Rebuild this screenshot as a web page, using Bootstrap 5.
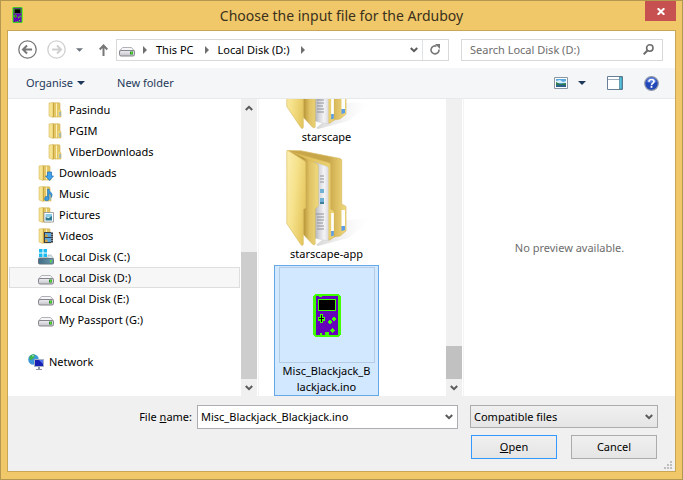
<!DOCTYPE html>
<html lang="en">
<head>
<meta charset="utf-8">
<meta name="viewport" content="width=device-width, initial-scale=1">
<title>Choose the input file for the Arduboy</title>
<link href="https://cdn.jsdelivr.net/npm/bootstrap@5.3.0/dist/css/bootstrap.min.css" rel="stylesheet">
<style>
  body { font-family: "Noto Sans", "Open Sans", sans-serif; font-size: 11px; line-height: 16px; color: #000; }
  button { color: inherit; }
  svg { display: block; flex: none; }
  .dialog-frame { background: #f0c869; border: 1px solid #b5984f; padding: 0 6px 7px; }
  .title-bar { height: 29px; padding-left: 5px; }
  .title-bar h1 { font-size: 14px; line-height: 30px; color: #3a301c; }
  .app-icon { margin: 6px 15px 0 0; }
  .close-btn { width: 31px; height: 20px; background: #c75050; }
  .client { border: 1px solid #c9a655; background: #fff; min-height: 0; }
  .addr-row { height: 37px; padding: 0 12px 0 10px; }
  .gap-before { margin-left: 10px; }
  .field { height: 22px; border: 1px solid #d9d9d9; background: #fff; }
  .address { padding-left: 2px; }
  .crumb { color: #000; margin: 0 11px 0 9px; }
  .refresh { width: 26px; padding: 0 7px; }
  .search-box { width: 202px; margin-left: 12px; }
  .search-box input { font-size: 11px; line-height: 16px; color: #6d6d6d; outline: 0; min-width: 0; }
  .search-box input::placeholder { color: #6d6d6d; opacity: 1; }
  .command-bar { height: 31px; background: #f5f6f7; border-bottom: 1px solid #e8e9eb; color: #1e395b; padding: 0 16px 0 18px; }
  .tool { margin-right: 21px; }
  .panes { flex: 1 1 0; min-height: 0; }
  .nav-pane { width: 251px; padding-right: 1px; border-right: 1px solid #f4f4f4; }
  .tree-row { height: 21px; margin: 0 1px; gap: 5px; color: #000; border: 1px solid transparent; }
  .tree-row.current { background: #f7f7f7; border-color: #dedede; }
  .level-1 { padding-left: 18px; }
  .level-2 { padding-left: 28px; }
  .level-3 { padding-left: 38px; }
  .tree-gap { height: 21px; }
  .scroller { width: 16px; background: #f0f0f0; }
  .scroller button { height: 17px; }
  .thumb { background: #cdcdcd; }
  .nav-thumb { height: 127px; }
  .file-thumb { height: 33px; background: #c1c1c1; }
  .file-pane { width: 205px; padding-right: 1px; border-right: 1px solid #f4f4f4; }
  .file-list { padding-left: 15px; min-width: 0; }
  .file-item { width: 105px; height: 117px; padding-top: 2px; color: #000; }
  .file-item > svg { margin-left: 14px; }
  .file-item.chosen { height: 131px; padding-top: 1px; background: #d1e8ff; border: 1px solid #66a7e8; }
  .preview-box { width: 96px; height: 96px; border: 1px solid #b5cde4; }
  .preview-note { color: #6d6d6d; }
  .dialog-footer { background: #f0f0f0; height: 75px; padding: 9px 17px 0 0; }
  .name-label { margin-right: 5px; }
  .name-box { width: 261px; height: 24px; border: 1px solid #abadb3; background: #fff; }
  .name-box input { font-size: 11px; line-height: 16px; padding: 0 3px; outline: 0; min-width: 0; color: #000; }
  .type-box { width: 188px; margin-left: 12px; }
  .type-box select { appearance: none; height: 23px; border: 1px solid #acacac; background: linear-gradient(#f0f0f0, #e5e5e5); padding: 0 3px; color: #000; }
  .type-box svg { right: 5px; top: 9px; pointer-events: none; }
  .dlg-buttons { gap: 14px; margin-top: 6px; padding-right: 1px; }
  .dlg-btn { width: 86px; height: 24px; border: 1px solid #acacac; background: linear-gradient(#f0f0f0, #e5e5e5); }
  .dlg-btn.primary { border-color: #3399ff; }
  .size-grip { right: 3px; bottom: 2px; }
</style>
<script src="https://cdn.jsdelivr.net/npm/bootstrap@5.3.0/dist/js/bootstrap.bundle.min.js"></script>
</head>
<body>
<svg width="0" height="0" class="position-absolute" aria-hidden="true">
  <defs>
    <linearGradient id="gFront" x1="0" x2="1" y1="0" y2=".5"><stop offset="0" stop-color="#fbeeb0"/><stop offset=".5" stop-color="#f6e28c"/><stop offset="1" stop-color="#e6c860"/></linearGradient>
    <linearGradient id="gMid" x1="0" x2="1"><stop offset=".5" stop-color="#b8963a"/><stop offset=".7" stop-color="#dfc264"/><stop offset="1" stop-color="#f1da80"/></linearGradient>
    <linearGradient id="gThird" x1="0" x2="1"><stop offset="0" stop-color="#d9b64f"/><stop offset="1" stop-color="#ecd272"/></linearGradient>
    <linearGradient id="gBack" x1="0" x2="1"><stop offset=".7" stop-color="#c8a64a"/><stop offset=".85" stop-color="#dec062"/><stop offset="1" stop-color="#efd980"/></linearGradient>
    <linearGradient id="gPaper" x1="0" x2="1"><stop offset="0" stop-color="#a9abb0"/><stop offset=".35" stop-color="#d4d5d9"/><stop offset=".7" stop-color="#f4f4f7"/><stop offset="1" stop-color="#dcdde0"/></linearGradient>
    <linearGradient id="gShade" x1="0" x2="1"><stop offset="0" stop-color="#bbb" stop-opacity=".6"/><stop offset="1" stop-color="#eee" stop-opacity="0"/></linearGradient>
    <linearGradient id="gDrive" x1="0" x2="0" y1="0" y2="1"><stop offset="0" stop-color="#eeeef2"/><stop offset="1" stop-color="#c2c3ca"/></linearGradient>
    <linearGradient id="gSys" x1="0" x2="1"><stop offset="0" stop-color="#3f6d86"/><stop offset="1" stop-color="#6a9bb0"/></linearGradient>
  </defs>
  <symbol id="arduboy" viewBox="0 0 28 43">
    <path fill="#40ff00" d="M2 0h24v1h1v1h1v39h-1v1h-1v1H2v-1H1v-1H0V2h1V1h1z"/>
    <path fill="#6600bb" d="M3 2h22v39H3z"/>
    <path fill="#40ff00" d="M6 2h3v1H6zM5 5h18v12H5zM7 20h3v3h2v4h-2v2H7v-2H5v-4h2zM16 26h2v1h1v2h-1v1h-2v-1h-1v-2h1zM20 23h2v1h1v2h-1v1h-2v-1h-1v-2h1zM19 34h1v1h1v1h1v1h-1v1h-1v1h-1v-1h-1v-1h-1v-1h1v-1h1zM7 39h2v2H7zM12 38h4v3h-4z"/>
    <path d="M6 6h16v10H6zM8 21h1v3h2v1H9v3H8v-3H6v-1h2z"/>
  </symbol>
  <symbol id="bigfolder" viewBox="0 0 96 96">
    <path fill="url(#gShade)" d="M30 95L60 70l20-1 3 3-21 16-30 8z"/>
    <path fill="url(#gBack)" stroke="#d8bd65" stroke-width=".7" d="M1 .5L15 .8 54 8.500q1.700.5 1.700 2V54l4.300 2.500V81l-6 5-12 2z"/>
    <path fill="#fff" d="M55.500 60h3.500v16h-3.500z"/><path fill="#5a9de6" d="M55.500 76h3.500v4l-3.500 1z"/>
    <path fill="url(#gThird)" stroke="#cba94a" stroke-width=".5" d="M3 1l40 11.500q1.800.7 1.800 2.500v44l3.500 2v26l-5.300 3.500z"/>
    <path fill="#fff" d="M45.200 63h2.600v18h-2.600z"/><path fill="#5a9de6" d="M45.200 81h2.600v4.500l-2.600 1z"/>
    <path fill="url(#gPaper)" stroke="#c9cace" stroke-width=".4" d="M28 12l13 4.500q1.300.5 1.300 2V91L28 88z"/>
    <path stroke="#8d929a" d="M34 26h4M34 29h4M34 32h4M30 64h8M31 67h7M31 70h7M31 73h6M31 76h7M31 79h7"/>
    <path fill="#70b0d5" d="M34 39h4v4h-4zM34 48h4v5h-4z"/><path fill="#3d7f9a" d="M34 52h4v2h-4z"/>
    <path fill="url(#gMid)" stroke="#d0ae4e" stroke-width=".4" d="M3 1l27.500 12.500q1.800 1 1.800 3V56l-3 3v35q-1.300 2-3 0L15 82z"/>
    <path fill="url(#gFront)" stroke="#dcc067" stroke-width=".7" d="M.8 1.500Q1 0 2.500.8l16 10q1.200 1 1.200 2.700v44l-2.400 2v35q-1 2-2.500 0L.8 73.500z"/>
  </symbol>
  <symbol id="folder" viewBox="0 0 16 16">
    <path fill="#e4c665" stroke="#cfae4b" stroke-width=".6" d="M5 .8h6q1 0 1 1V8l1 1v6H5z"/><path fill="#fbf0bd" d="M8 2l1-1v13l-1 1z"/>
    <path fill="#f6e390" stroke="#d7ba5f" stroke-width=".6" d="M1 1l4-.5v15L1 14z"/><path fill="#c9a540" d="M5 1h1v14H5z"/>
    <path fill="#ecd378" d="M10 8h2.500v6.500H10z"/><path fill="#68ace8" d="M11.500 10h1v4h-1z"/>
  </symbol>
  <symbol id="drive" viewBox="0 0 16 16">
    <path fill="#f6f6f8" stroke="#b0b1b6" d="M3.500 5.500h9l3 3.500H.5z"/><rect x=".5" y="8.500" width="15" height="5.500" rx="1.500" fill="url(#gDrive)" stroke="#85868c"/>
    <path fill="#2b8a2b" d="M11 9.500h3v3h-3z"/><path fill="#54e02c" d="M12 10h1.500v2H12z"/>
  </symbol>
  <symbol id="sysdrive" viewBox="0 0 16 16">
    <path fill="#1cbbef" d="M1 0h3.500v3.500H1zM5.500 0H9v3.500H5.500zM1 4.500h3.500V8H1zM5.500 4.500H9V8H5.500z"/><path fill="#d9e3ea" stroke="#9aa6ae" stroke-width=".6" d="M10 6h3l3 4H0l1-1.500h9z"/>
    <rect x=".5" y="9.500" width="15" height="5.500" rx="1" fill="url(#gSys)" stroke="#63747e"/><path fill="#54e02c" d="M12 11h1.500v2.500H12z"/>
  </symbol>
  <symbol id="chev" viewBox="0 0 8 6"><path fill="none" stroke="#5a5a5a" stroke-width="2" d="M.8 1L4 4.200 7.200 1"/></symbol>
  <symbol id="tri" viewBox="0 0 4 8"><path fill="#6f6f6f" d="M0 0l4 4-4 4z"/></symbol>
  <symbol id="down" viewBox="0 0 8 4"><path fill="currentColor" d="M0 0h8L4 4z"/></symbol>
</svg>

<div class="dialog-frame vh-100 d-flex flex-column">
  <header class="title-bar flex-shrink-0 d-flex align-items-start">
    <svg width="11" height="16" class="app-icon"><use href="#arduboy"/></svg>
    <h1 class="flex-grow-1 text-center m-0 fw-normal">Choose the input file for the Arduboy</h1>
    <button type="button" class="close-btn border-0 p-0 d-flex align-items-center justify-content-center" aria-label="Close">
      <svg width="8" height="7" viewBox="0 0 8 7"><path stroke="#fff" stroke-width="2" d="M.7.200l6.600 6.600M7.300.200L.7 6.800"/></svg>
    </button>
  </header>

  <main class="client flex-grow-1 d-flex flex-column">
    <div class="addr-row flex-shrink-0 d-flex align-items-center">
      <button type="button" class="border-0 bg-transparent p-0" aria-label="Back"><svg width="19" height="19" viewBox="0 0 19 19" fill="none" stroke="#777"><circle cx="9.500" cy="9.500" r="8.700" stroke-width="1.300"/><path stroke-width="2" d="M14 9.500H5.500M9 5.500L5 9.500l4 4"/></svg></button>
      <button type="button" class="border-0 bg-transparent p-0 gap-before" aria-label="Forward"><svg width="19" height="19" viewBox="0 0 19 19" fill="none" stroke="#cfcfcf"><circle cx="9.500" cy="9.500" r="8.700" stroke-width="1.300"/><path stroke-width="2" d="M5 9.500h8.500M10 5.500l4 4-4 4"/></svg></button>
      <button type="button" class="border-0 bg-transparent p-0 gap-before text-secondary" aria-label="Recent locations"><svg width="7" height="4"><use href="#down"/></svg></button>
      <button type="button" class="border-0 bg-transparent p-0 ms-3" aria-label="Up"><svg width="9" height="12" viewBox="0 0 9 12" fill="none" stroke="#777" stroke-width="2"><path d="M4.500 12V2M.7 5.500l3.800-4 3.800 4"/></svg></button>
      <nav class="field address flex-grow-1 d-flex align-items-center ms-2" aria-label="Address">
        <svg width="16" height="16"><use href="#drive"/></svg>
        <svg width="4" height="8" class="ms-2"><use href="#tri"/></svg>
        <a href="#" class="crumb text-decoration-none">This PC</a>
        <svg width="4" height="8"><use href="#tri"/></svg>
        <a href="#" class="crumb text-decoration-none">Local Disk (D:)</a>
        <svg width="4" height="8"><use href="#tri"/></svg>
        <button type="button" class="border-0 bg-transparent p-0 ms-auto me-1" aria-label="Previous locations"><svg width="8" height="6"><use href="#chev"/></svg></button>
        <button type="button" class="refresh border-0 border-start bg-transparent h-100" aria-label="Refresh"><svg width="10" height="11" viewBox="0 0 10 11"><path fill="none" stroke="#777" stroke-width="1.600" d="M6.500 2.200A4 4 0 1 0 9 5.500"/><path fill="#777" d="M5 0h5v5z"/></svg></button>
      </nav>
      <div class="field search-box d-flex align-items-center px-2">
        <input type="search" class="border-0 p-0 flex-grow-1 bg-transparent" placeholder="Search Local Disk (D:)" aria-label="Search Local Disk (D:)">
        <svg width="11" height="11" viewBox="0 0 11 11" fill="none" stroke="#6d6d6d"><circle cx="6.800" cy="4" r="3.200" stroke-width="1.600"/><path stroke-width="2" d="M4.500 6.500L.7 10.300"/></svg>
      </div>
    </div>

    <div class="command-bar flex-shrink-0 d-flex align-items-center">
      <button type="button" class="border-0 bg-transparent p-0 d-flex align-items-center">Organise<svg width="8" height="4" class="ms-1"><use href="#down"/></svg></button>
      <button type="button" class="border-0 bg-transparent p-0 ms-4 ps-2">New folder</button>
      <button type="button" class="tool border-0 bg-transparent p-0 ms-auto d-flex align-items-center" aria-label="Change view">
        <svg width="14" height="12" viewBox="0 0 14 12"><path fill="#fff" stroke="#8b96a5" d="M.5.5h13v11H.5z"/><path fill="#5aa8e0" d="M2 2h10v5H2z"/><path fill="#d9eefa" d="M2 4l4-1 3 2 3-1v2H2z"/><path fill="#2e7d4d" d="M2 5l4 2 6-1v2H2z"/><path fill="#2a5f8f" d="M2 8h10v2H2z"/></svg>
        <svg width="8" height="4" class="gap-before"><use href="#down"/></svg>
      </button>
      <button type="button" class="tool border-0 bg-transparent p-0" aria-label="Preview pane"><svg width="16" height="14" viewBox="0 0 16 14"><path fill="#fff" stroke="#6a7f95" d="M.5.5h15v13H.5z"/><path stroke="#9aabbb" d="M1 3.500h12"/><path fill="#56c3e0" stroke="#3b6f86" stroke-width=".6" d="M12.500 1h2.500v12h-2.500z"/></svg></button>
      <button type="button" class="border-0 bg-transparent p-0" aria-label="Help"><svg width="15" height="15" viewBox="0 0 15 15"><circle cx="7.500" cy="7.500" r="6.800" fill="#2147b8" stroke="#8f97a8" stroke-width="1.200"/><path fill="#6d92e8" opacity=".7" d="M2.500 6a5 4.500 0 0 1 10 0q-5 2-10 0z"/><path fill="none" stroke="#fff" stroke-width="1.700" d="M5 5.800q0-2.300 2.500-2.300T10 5.500q0 1-1.200 1.700-1.300.7-1.300 2"/><path fill="#fff" d="M6.600 10h1.800v1.800H6.600z"/></svg></button>
    </div>

    <div class="panes d-flex">
      <aside class="nav-pane flex-shrink-0 d-flex">
        <nav class="flex-grow-1" aria-label="Folders">
          <a href="#" class="tree-row level-3 d-flex align-items-center text-decoration-none"><svg width="16" height="16"><use href="#folder"/></svg>Pasindu</a>
          <a href="#" class="tree-row level-3 d-flex align-items-center text-decoration-none"><svg width="16" height="16"><use href="#folder"/></svg>PGIM</a>
          <a href="#" class="tree-row level-3 d-flex align-items-center text-decoration-none"><svg width="16" height="16"><use href="#folder"/></svg>ViberDownloads</a>
          <a href="#" class="tree-row level-2 d-flex align-items-center text-decoration-none"><svg width="16" height="16" viewBox="0 0 16 16"><use href="#folder" width="16" height="16"/><path fill="#3fa3ec" stroke="#1c6fb8" stroke-width=".7" d="M9.500 7h4v4h2L11.500 15.500 7.500 11h2z"/></svg>Downloads</a>
          <a href="#" class="tree-row level-2 d-flex align-items-center text-decoration-none"><svg width="16" height="16" viewBox="0 0 16 16"><use href="#folder" width="16" height="16"/><path fill="#3a9be0" stroke="#1b67a8" stroke-width=".5" d="M9.500 3h1.500q0 2 2 3.500t.5 5q0-3-2.500-4v5a2.200 2.200 0 1 1-1.500-2z"/></svg>Music</a>
          <a href="#" class="tree-row level-2 d-flex align-items-center text-decoration-none"><svg width="16" height="16" viewBox="0 0 16 16"><use href="#folder" width="16" height="16"/><path fill="#fff" stroke="#8c8f96" stroke-width=".8" d="M6 5.500h9.500v9.500H6z"/><path fill="#8ccbe8" d="M7.500 7H14v3H7.500z"/><path fill="#2f7d95" d="M7.500 10l3 1 3.500-2v4.500H7.500z"/></svg>Pictures</a>
          <a href="#" class="tree-row level-2 d-flex align-items-center text-decoration-none"><svg width="16" height="16" viewBox="0 0 16 16"><use href="#folder" width="16" height="16"/><path fill="#3b4048" d="M6 4h9v11H6z"/><path fill="#5ba7dd" d="M7 5h6v4H7zM7 10h6v4H7z"/><path fill="#c9a24a" d="M7 7l2-1 1 3H7zM7 12l2-1 1 3H7z"/><path stroke="#d8dce0" stroke-dasharray="1 1" d="M14 4v11"/></svg>Videos</a>
          <a href="#" class="tree-row level-2 d-flex align-items-center text-decoration-none"><svg width="16" height="16"><use href="#sysdrive"/></svg>Local Disk (C:)</a>
          <a href="#" class="tree-row level-2 current d-flex align-items-center text-decoration-none" aria-current="true"><svg width="16" height="16"><use href="#drive"/></svg>Local Disk (D:)</a>
          <a href="#" class="tree-row level-2 d-flex align-items-center text-decoration-none"><svg width="16" height="16"><use href="#drive"/></svg>Local Disk (E:)</a>
          <a href="#" class="tree-row level-2 d-flex align-items-center text-decoration-none"><svg width="16" height="16"><use href="#drive"/></svg>My Passport (G:)</a>
          <div class="tree-gap"></div>
          <a href="#" class="tree-row level-1 d-flex align-items-center text-decoration-none"><svg width="16" height="16" viewBox="0 0 16 16"><circle cx="5.500" cy="5.500" r="5.300" fill="#3d97dc"/><path fill="#3db54a" d="M2 2q3-3 5-1L6 4 3 6 1 5zM6 6l4-1-1 4-3 1z"/><path fill="#b8e3fa" d="M4 1.500l2-.5-1 2z"/><path fill="#1722b5" stroke="#a9b2c4" d="M6.500 5.500h9v7h-9z"/><path fill="#5576f0" d="M11 6h4v4z"/><path fill="#8c95a5" d="M10 13h2v2h2v1H8v-1h2z"/></svg>Network</a>
        </nav>
        <div class="scroller d-flex flex-column">
          <button type="button" class="border-0 bg-transparent p-0 d-flex align-items-center justify-content-center" aria-label="Scroll folders up"><svg width="8" height="6" viewBox="0 0 8 6"><path fill="none" stroke="#5a5a5a" stroke-width="2" d="M.8 5L4 1.800 7.200 5"/></svg></button>
          <div class="thumb nav-thumb mt-auto"></div>
          <button type="button" class="border-0 bg-transparent p-0 d-flex align-items-center justify-content-center" aria-label="Scroll folders down"><svg width="8" height="6"><use href="#chev"/></svg></button>
        </div>
      </aside>

      <section class="file-pane flex-shrink-0 d-flex" aria-label="Files">
        <div class="file-list flex-grow-1 d-flex flex-column justify-content-end overflow-hidden">
          <a href="#" class="file-item flex-shrink-0 d-flex flex-column align-items-center text-decoration-none"><svg width="96" height="96"><use href="#bigfolder"/></svg>starscape</a>
          <a href="#" class="file-item flex-shrink-0 d-flex flex-column align-items-center text-decoration-none"><svg width="96" height="96"><use href="#bigfolder"/></svg>starscape-app</a>
          <a href="#" class="file-item chosen flex-shrink-0 d-flex flex-column align-items-center text-decoration-none text-center">
            <span class="preview-box d-flex align-items-center justify-content-center"><svg width="28" height="43"><use href="#arduboy"/></svg></span>
            <span>Misc_Blackjack_B<br>lackjack.ino</span>
          </a>
        </div>
        <div class="scroller d-flex flex-column">
          <div class="thumb file-thumb mt-auto"></div>
          <button type="button" class="border-0 bg-transparent p-0 d-flex align-items-center justify-content-center" aria-label="Scroll files down"><svg width="8" height="6"><use href="#chev"/></svg></button>
        </div>
      </section>

      <section class="preview-note flex-grow-1 d-flex align-items-center justify-content-center" aria-label="Preview">No preview available.</section>
    </div>

    <form class="dialog-footer flex-shrink-0 position-relative">
      <div class="d-flex justify-content-end align-items-start">
        <label for="fname" class="name-label pt-1">File <u>n</u>ame:</label>
        <div class="name-box d-flex align-items-center pe-1">
          <input id="fname" type="text" class="border-0 flex-grow-1 bg-transparent" value="Misc_Blackjack_Blackjack.ino">
          <button type="button" class="border-0 bg-transparent p-0" aria-label="Recent file names"><svg width="8" height="6"><use href="#chev"/></svg></button>
        </div>
        <div class="type-box position-relative">
          <select class="w-100 rounded-0" aria-label="File type"><option>Compatible files</option></select>
          <svg width="8" height="6" class="position-absolute"><use href="#chev"/></svg>
        </div>
      </div>
      <div class="dlg-buttons d-flex justify-content-end">
        <button type="submit" class="dlg-btn primary p-0"><u>O</u>pen</button>
        <button type="button" class="dlg-btn p-0">Cancel</button>
      </div>
      <svg width="8" height="8" viewBox="0 0 8 8" class="size-grip position-absolute" fill="#bfbfbf"><path d="M6 0h2v2H6zM3 3h2v2H3zM6 3h2v2H6zM0 6h2v2H0zM3 6h2v2H3zM6 6h2v2H6z"/></svg>
    </form>
  </main>
</div>
</body>
</html>
